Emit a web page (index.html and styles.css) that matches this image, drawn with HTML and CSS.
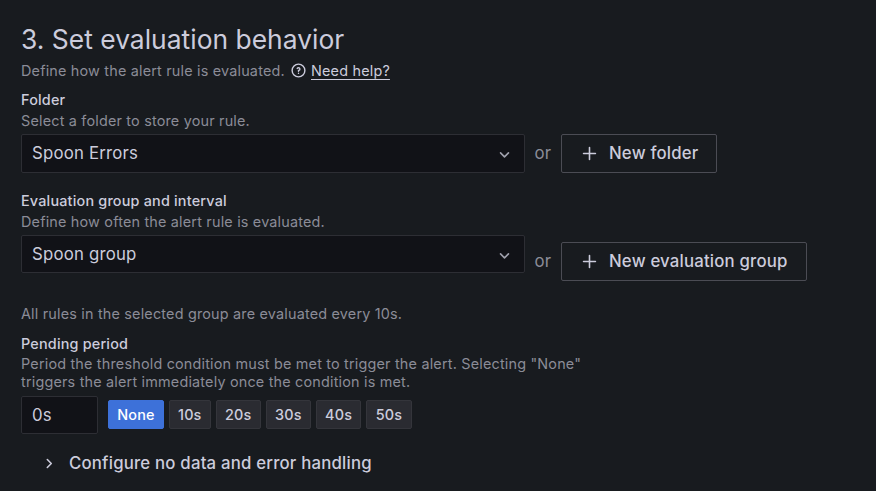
FILE: index.html
```html
<!DOCTYPE html>
<html lang="en">
<head>
<meta charset="utf-8">
<title>Set evaluation behavior</title>
<link rel="stylesheet" href="styles.css">
</head>
<body>
<main class="section">
  <h1 class="title">3. Set evaluation behavior</h1>
  <div class="intro"><span class="intro-text">Define how the alert rule is evaluated.</span>
    <svg class="help-icon" viewBox="0 0 24 24" fill="currentColor"><path d="M11.29,15.29a1.58,1.58,0,0,0-.12.15.76.76,0,0,0-.09.18.64.64,0,0,0-.06.18,1.36,1.36,0,0,0,0,.2.84.84,0,0,0,.08.38.9.9,0,0,0,.54.54.94.94,0,0,0,.76,0,.9.9,0,0,0,.54-.54A1,1,0,0,0,13,16a1,1,0,0,0-.29-.71A1,1,0,0,0,11.29,15.29ZM12,2A10,10,0,1,0,22,12,10,10,0,0,0,12,2Zm0,18a8,8,0,1,1,8-8A8,8,0,0,1,12,20ZM12,7A3,3,0,0,0,9.4,8.5a1,1,0,1,0,1.73,1A1,1,0,0,1,12,9a1,1,0,0,1,0,2,1,1,0,0,0-1,1v1a1,1,0,0,0,2,0v-.18A3,3,0,0,0,12,7Z"/></svg>
    <a class="help" href="#">Need help?</a></div>

  <label class="label folder-label">Folder</label>
  <p class="desc">Select a folder to store your rule.</p>
  <div class="row folder-row">
    <div class="select"><span>Spoon Errors</span><svg class="chevron down" viewBox="0 0 24 24"><path d="M7 10l5 5 5-5"/></svg></div>
    <span class="or">or</span>
    <button class="button new-folder"><svg class="plus" viewBox="0 0 24 24"><path d="M12 4.5v15M4.5 12h15"/></svg><span>New folder</span></button>
  </div>

  <label class="label">Evaluation group and interval</label>
  <p class="desc">Define how often the alert rule is evaluated.</p>
  <div class="row group-row">
    <div class="select"><span>Spoon group</span><svg class="chevron down" viewBox="0 0 24 24"><path d="M7 10l5 5 5-5"/></svg></div>
    <span class="or">or</span>
    <button class="button new-group"><svg class="plus" viewBox="0 0 24 24"><path d="M12 4.5v15M4.5 12h15"/></svg><span>New evaluation group</span></button>
  </div>
  <p class="desc note">All rules in the selected group are evaluated every 10s.</p>

  <label class="label">Pending period</label>
  <p class="desc pending-desc">Period the threshold condition must be met to trigger the alert. Selecting "None"<br>triggers the alert immediately once the condition is met.</p>
  <div class="periods">
    <input class="period-input" value="0s" aria-label="Pending period">
    <button class="chip none">None</button>
    <button class="chip">10s</button>
    <button class="chip w45">20s</button>
    <button class="chip w45">30s</button>
    <button class="chip w46">40s</button>
    <button class="chip w46">50s</button>
  </div>
  <div class="collapse"><svg class="chevron" viewBox="0 0 24 24"><path d="M10.5 7l5 5-5 5"/></svg><span>Configure no data and error handling</span></div>
</main>
</body>
</html>
```
FILE: styles.css
```css
* { box-sizing: border-box; }
body {
  margin: 0;
  background: #181b1f;
  color: #ccccdc;
  font-family: Inter, "Liberation Sans", sans-serif;
  font-size: 14.4px;
  letter-spacing: 0.19px;
  overflow: hidden;
}
.section { height: 491px; padding: 22px 21px 0; }
.title { margin: 0; font-size: 26.4px; font-weight: 400; line-height: 34px; letter-spacing: 0.02px; }
.intro { display: flex; align-items: center; height: 20px; margin-top: 4px; color: #8b8c97; white-space: nowrap; }
.intro-text { width: 269px; }
.help-icon { width: 17px; height: 17px; margin-right: 4px; color: #ccccdc; }
.help { color: #ccccdc; text-decoration: underline; text-underline-offset: 3px; }
.label { display: block; height: 20px; line-height: 20px; font-size: 14.4px; font-weight: 500; }
.folder-label { margin-top: 10px; }
.desc { margin: 0; height: 24px; line-height: 22px; color: #8b8c97; white-space: nowrap; }
.row { display: flex; font-size: 16.8px; }
.folder-row { height: 57px; }
.group-row { height: 68px; }
.select { display: flex; align-items: center; justify-content: space-between; width: 504px; height: 39px; padding: 0 10px; border: 1px solid #2d2e34; border-radius: 2px; background: #111217; }
.folder-row .select { padding-bottom: 1px; }
.chevron { width: 19px; height: 19px; fill: none; stroke: currentColor; stroke-width: 2; stroke-linecap: round; stroke-linejoin: round; }
.down { color: #a0a1ad; transform: translateY(1px); }
.or { width: 36px; line-height: 38px; text-align: center; color: #8b8c97; }
.button { display: flex; align-items: center; height: 39px; padding: 0 0 1px 18px; border: 1px solid #4b4c54; border-radius: 2px; background: transparent; color: #ccccdc; font: 500 16.8px Inter, sans-serif; letter-spacing: 0.18px; white-space: nowrap; }
.plus { width: 19px; height: 19px; margin-right: 10px; fill: none; stroke: currentColor; stroke-width: 2; stroke-linecap: round; }
.new-folder { width: 156px; }
.new-group { width: 246px; margin-top: 7px; }
.group-row .select { height: 38px; }
.group-row .or { line-height: 52px; }
.note { height: 31px; }
.pending-desc { height: 42px; padding-top: 1px; line-height: 18px; }
.periods { display: flex; align-items: flex-start; height: 38px; gap: 4.8px; }
.period-input { width: 77px; height: 38px; margin-right: 5.2px; padding: 0 10px; border: 1px solid #2d2e34; border-radius: 2px; background: #111217; color: #ccccdc; font: 400 16.8px Inter, sans-serif; letter-spacing: 0.18px; }
.chip { width: 42px; height: 29px; margin-top: 4px; padding: 0; border: 1px solid #34353b; border-radius: 2px; background: #2a2b31; color: #ccccdc; font: 500 14.4px Inter, sans-serif; letter-spacing: 0.18px; }
.none { width: 56px; border-color: #3d71d9; background: #3d71d9; color: #fff; }
.w45 { width: 45.3px; }
.w46 { width: 45.6px; }
.collapse { display: flex; align-items: center; height: 24px; margin: 17px 0 0 18px; gap: 11px; font-size: 16.8px; font-weight: 500; }
```
